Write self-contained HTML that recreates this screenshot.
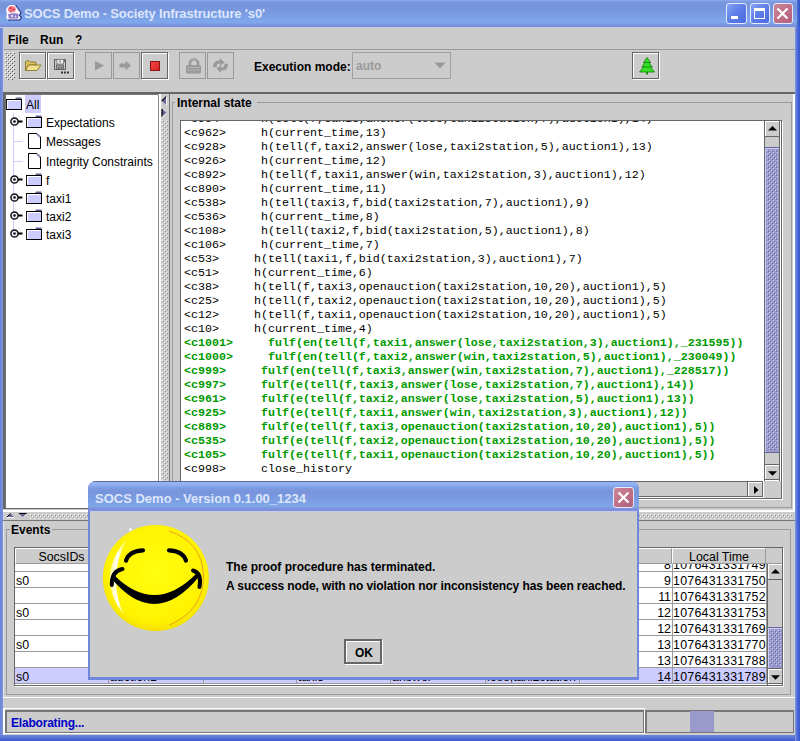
<!DOCTYPE html><html><head><meta charset="utf-8"><style>
html,body{margin:0;padding:0;width:800px;height:741px;overflow:hidden;background:#cccccc;}
body{position:relative;font-family:"Liberation Sans",sans-serif;font-size:12px;color:#000;}
div{box-sizing:border-box;position:absolute;}
.m{font-family:"Liberation Mono",monospace;font-size:11.67px;line-height:14px;white-space:pre;left:3px;}
.g{color:#009a00;font-weight:bold;}
.c{line-height:14px;font-size:12.4px;white-space:pre;}
</style></head><body>
<svg width="0" height="0" style="position:absolute"><defs>
<pattern id="bg" width="4" height="4" patternUnits="userSpaceOnUse"><rect x="0" y="0" width="1" height="1" fill="#ffffff"/><rect x="1" y="1" width="1" height="1" fill="#555555"/><rect x="2" y="2" width="1" height="1" fill="#ffffff"/><rect x="3" y="3" width="1" height="1" fill="#555555"/></pattern>
<pattern id="bgl" width="4" height="4" patternUnits="userSpaceOnUse"><rect x="0" y="0" width="1" height="1" fill="#ffffff"/><rect x="1" y="1" width="1" height="1" fill="#888888"/><rect x="2" y="2" width="1" height="1" fill="#ffffff"/><rect x="3" y="3" width="1" height="1" fill="#888888"/></pattern>
<pattern id="bt" width="4" height="4" patternUnits="userSpaceOnUse"><rect width="4" height="4" fill="#9999cc"/><rect x="0" y="0" width="1" height="1" fill="#ccccff"/><rect x="1" y="1" width="1" height="1" fill="#666699"/><rect x="2" y="2" width="1" height="1" fill="#ccccff"/><rect x="3" y="3" width="1" height="1" fill="#666699"/></pattern>
</defs></svg>
<div style="left:0px;top:0px;width:3px;height:741px;background:linear-gradient(90deg,#6a84d6,#7d94de)"></div>
<div style="left:0px;top:735px;width:800px;height:6px;background:linear-gradient(#7088d8,#4c68d4 4px,#3e5acc)"></div>
<div style="left:3px;top:27px;width:1px;height:708px;background:#c8ccec"></div>
<div style="left:0px;top:0px;width:800px;height:27px;background:linear-gradient(#8cacee 0,#7a98e0 2px,#7594dc 6px,#7898e0 12px,#7ca2e8 18px,#80a8ec 22px,#7896e0 25px,#7a8cd4 26px)"></div>
<div style="left:0px;top:27px;width:800px;height:1px;background:#c4cae8"></div>
<div style="left:795px;top:27px;width:5px;height:714px;background:linear-gradient(90deg,#8a9ae0 0,#6a84da 1px,#4262d8 3px,#3a58d0 5px)"></div>
<div style="left:797px;top:0px;width:3px;height:27px;background:linear-gradient(90deg,#5070d8,#3050c8)"></div>
<svg style="position:absolute;left:5px;top:4px;" width="17" height="18" viewBox="0 0 17 18"><path d="M1.5 4 L5 1 L10.5 1 L13 4.5 L16 8.5 L14.5 11.5 L16.5 13.5 L14.5 16 L3 16 L1 13.5 L2 10 L1 7 Z" fill="#f8f4fa"/>
<path d="M10.5 1 L13 4.5 L16 8.5 L14.5 11.5 L16.5 13.5 L14.5 16 L3 16" fill="none" stroke="#1c2c80" stroke-width="1.1"/>
<path d="M3 4 L6 2 L10 2.5 L11 5.5 L9.5 8 L5 8.5 L3 6.5 Z" fill="#f07080" opacity="0.85"/>
<circle cx="5.5" cy="4" r="1" fill="#d82030"/><circle cx="8.5" cy="5.5" r="1.1" fill="#e02838"/><circle cx="6" cy="7" r="0.8" fill="#c83040"/>
<path d="M3 10.5 Q8 8.5 13.5 10 L13 14.5 L4 14.5 Z" fill="#7e6cc0" opacity="0.9"/>
<circle cx="7" cy="12" r="1.2" fill="#e8e0ff"/><circle cx="10.5" cy="12.5" r="0.9" fill="#e8e0ff"/></svg>
<div style="left:24px;top:6px;white-space:pre;font-weight:bold;font-size:13px;line-height:15px;color:#dde6fa;letter-spacing:-0.15px">SOCS Demo - Society Infrastructure 's0'</div>
<div style="left:726px;top:3px;width:21px;height:21px;background:linear-gradient(135deg,#88a4f4 0,#5c7ce8 50%,#4a6ae0);border:1px solid #e4eafc;border-radius:3px"></div>
<div style="left:750px;top:3px;width:20px;height:21px;background:linear-gradient(135deg,#88a4f4 0,#5c7ce8 50%,#4a6ae0);border:1px solid #e4eafc;border-radius:3px"></div>
<div style="left:773px;top:3px;width:20px;height:21px;background:linear-gradient(135deg,#cc8898 0,#c07088 50%,#b06078);border:1px solid #e4eafc;border-radius:3px"></div>
<div style="left:731px;top:16px;width:7px;height:3px;background:#fff"></div>
<div style="left:754px;top:8px;width:11px;height:11px;border:1px solid #fff;border-top:3px solid #fff"></div>
<svg style="position:absolute;left:776px;top:7px;" width="13" height="13" viewBox="0 0 13 13"><path d="M1.5 1.5 L11.5 11.5 M11.5 1.5 L1.5 11.5" stroke="#fff" stroke-width="2.2"/></svg>
<div style="left:8px;top:33px;white-space:pre;font-weight:bold;line-height:14px">File</div>
<div style="left:40px;top:33px;white-space:pre;font-weight:bold;line-height:14px">Run</div>
<div style="left:75px;top:33px;white-space:pre;font-weight:bold;line-height:14px">?</div>
<div style="left:4px;top:49px;width:791px;height:1px;background:#999999"></div>
<svg style="position:absolute;left:5px;top:52px;shape-rendering:crispEdges" width="10" height="28" viewBox="0 0 10 28"><rect width="10" height="28" fill="url(#bg)"/></svg>
<div style="left:20px;top:53px;width:27px;height:27px;border:1px solid #fff"></div>
<div style="left:19px;top:52px;width:27px;height:27px;border:1px solid #666"></div>
<div style="left:48px;top:53px;width:27px;height:27px;border:1px solid #fff"></div>
<div style="left:47px;top:52px;width:27px;height:27px;border:1px solid #666"></div>
<div style="left:85px;top:52px;width:27px;height:27px;border:1px solid #999"></div>
<div style="left:113px;top:52px;width:27px;height:27px;border:1px solid #999"></div>
<div style="left:142px;top:53px;width:27px;height:27px;border:1px solid #fff"></div>
<div style="left:141px;top:52px;width:27px;height:27px;border:1px solid #666"></div>
<div style="left:179px;top:52px;width:27px;height:27px;border:1px solid #999"></div>
<div style="left:207px;top:52px;width:27px;height:27px;border:1px solid #999"></div>
<svg style="position:absolute;left:24px;top:58px;" width="18" height="16" viewBox="0 0 18 16"><path d="M1.5 3.5 L5 2.5 L6.5 4 L12 4 L12 7 L4.5 7 L1.5 12.5 Z" fill="#d8c060" stroke="#8a7420" stroke-width="0.9"/>
<path d="M4.5 7 L17 7 L13 12.5 L1.5 12.5 Z" fill="#f0e090" stroke="#8a7420" stroke-width="0.9"/></svg>
<svg style="position:absolute;left:52px;top:57px;" width="20" height="18" viewBox="0 0 20 18"><path d="M2.5 2.5 H13.5 V12.5 H2.5 Z" fill="#c8c8c8" stroke="#5a5a5a" stroke-width="1"/>
<rect x="5" y="2.5" width="6.5" height="4.5" fill="#f0f0f0" stroke="#777" stroke-width="0.8"/><rect x="7" y="3.5" width="2" height="2" fill="#999"/>
<rect x="12" y="3.5" width="1" height="1.5" fill="#555"/>
<rect x="4.5" y="8" width="7" height="4.5" fill="#aaa" stroke="#5a5a5a" stroke-width="0.8"/><rect x="6" y="9.5" width="1.5" height="2.5" fill="#666"/><rect x="8.8" y="9.5" width="1.5" height="2.5" fill="#666"/>
<rect x="9" y="14.5" width="2" height="2" fill="#333"/><rect x="12" y="14.5" width="2" height="2" fill="#333"/><rect x="15" y="14.5" width="2" height="2" fill="#333"/></svg>
<svg style="position:absolute;left:85px;top:52px;" width="27" height="27" viewBox="0 0 27 27"><path d="M10 9 L19 13.5 L10 18.5 Z" fill="#999"/></svg>
<svg style="position:absolute;left:113px;top:52px;" width="27" height="27" viewBox="0 0 27 27"><path d="M6.5 11.5 L12.5 11.5 L12.5 8.5 L18 13.5 L12.5 18.5 L12.5 15.5 L6.5 15.5 Z" fill="#999"/></svg>
<div style="left:150px;top:61px;width:10px;height:10px;background:linear-gradient(135deg,#f04444,#d82626);border:1px solid #8a1414"></div>
<svg style="position:absolute;left:179px;top:52px;" width="27" height="27" viewBox="0 0 27 27"><path d="M11 13 L11 10 Q15 4.5 19 10 L19 13" fill="none" stroke="#999" stroke-width="2.6"/>
<path d="M13.5 8 Q15 7 16.5 8" stroke="#bbb" stroke-width="1" fill="none"/>
<rect x="7" y="13" width="15" height="8.5" rx="1.5" fill="#999"/><path d="M8 15.5 H21 M8 18 H21" stroke="#b8b8b8" stroke-width="0.9"/></svg>
<svg style="position:absolute;left:207px;top:52px;" width="27" height="27" viewBox="0 0 27 27"><path d="M6 15 Q6 8 13 8.5 L13 6 L17.5 10.5 L13 14 L13 11.5 Q9.5 11 9.5 15.5 Z" fill="#999"/>
<path d="M21 12 Q21 19 14 18.5 L14 21 L9.5 16.5 L14 13 L14 15.5 Q17.5 16 17.5 11.5 Z" fill="#999"/></svg>
<div style="left:254px;top:60px;white-space:pre;font-weight:bold;line-height:14px">Execution mode:</div>
<div style="left:352px;top:52px;width:99px;height:27px;border:1px solid #a0a0a0"></div>
<div style="left:356px;top:59px;white-space:pre;color:#999;font-weight:bold;font-size:12px;line-height:14px">auto</div>
<svg style="position:absolute;left:434px;top:62px;" width="12" height="7" viewBox="0 0 12 7"><path d="M0.5 0.5 L11.5 0.5 L6 6.5 Z" fill="#999"/></svg>
<div style="left:633px;top:53px;width:27px;height:27px;border:1px solid #fff"></div>
<div style="left:632px;top:52px;width:27px;height:27px;border:1px solid #666"></div>
<svg style="position:absolute;left:638px;top:56px;" width="18" height="19" viewBox="0 0 18 19"><path d="M9 1.5 L12.5 6.5 L11 6.5 L14 11 L12.5 11 L16.5 16 L1.5 16 L5.5 11 L4 11 L7 6.5 L5.5 6.5 Z" fill="#33e022" stroke="#1c8a10" stroke-width="0.9" stroke-linejoin="round"/>
<path d="M5 6.5 H13 M3.5 11 H14.5" stroke="#1c8a10" stroke-width="0.9"/>
<rect x="8" y="16" width="2" height="2.5" fill="#1c8a10"/></svg>
<div style="left:3px;top:92px;width:792px;height:2px;background:#666"></div>
<div style="left:3px;top:92px;width:2px;height:417px;background:#666"></div>
<div style="left:5px;top:94px;width:154px;height:415px;border-top:1px solid #777;border-left:1px solid #777;border-right:1px solid #fff"></div>
<div style="left:6px;top:95px;width:152px;height:413px;background:#fff"></div>
<div style="left:158px;top:95px;width:1px;height:414px;background:#888"></div>
<div style="left:159px;top:94px;width:2px;height:416px;background:#fff"></div>
<div style="left:5px;top:508px;width:154px;height:1px;background:#666"></div>
<div style="left:3px;top:510px;width:792px;height:1px;background:#fff"></div>
<div style="left:3px;top:511px;width:792px;height:1px;background:#fff"></div>
<svg style="position:absolute;left:6px;top:97px;" width="16" height="13" viewBox="0 0 16 13"><path d="M8.5 3 L10 0.5 L15.5 0.5 L15.5 3 Z" fill="#666699"/><rect x="0.5" y="2.5" width="15" height="10" fill="#ccccff" stroke="#000" stroke-width="1"/><path d="M1 3.5 H14.5 M1.5 3.5 V12" stroke="#fff" stroke-width="1.2"/></svg>
<div style="left:25px;top:95px;width:16px;height:18px;background:#ccccff"></div>
<div style="left:26px;top:98px;white-space:pre;line-height:14px">All</div>
<div style="left:13px;top:113px;width:1px;height:118px;background:#ccccff"></div>
<svg style="position:absolute;left:10px;top:117px;" width="13" height="9" viewBox="0 0 13 9"><circle cx="4.5" cy="4.5" r="3.6" fill="#eeeeff" stroke="#111" stroke-width="1.5"/><circle cx="4.5" cy="4.5" r="1.3" fill="#111"/><path d="M8 4.5 H12.5" stroke="#000" stroke-width="2"/></svg>
<svg style="position:absolute;left:26px;top:115px;" width="16" height="13" viewBox="0 0 16 13"><path d="M8.5 3 L10 0.5 L15.5 0.5 L15.5 3 Z" fill="#666699"/><rect x="0.5" y="2.5" width="15" height="10" fill="#ccccff" stroke="#000" stroke-width="1"/><path d="M1 3.5 H14.5 M1.5 3.5 V12" stroke="#fff" stroke-width="1.2"/></svg>
<div style="left:46px;top:116px;white-space:pre;line-height:14px">Expectations</div>
<div style="left:14px;top:141px;width:9px;height:1px;background:#ccccff"></div>
<svg style="position:absolute;left:28px;top:133px;" width="14" height="16" viewBox="0 0 14 16"><path d="M0.5 0.5 L9 0.5 L12.5 4 L12.5 15.5 L0.5 15.5 Z" fill="#fff" stroke="#000" stroke-width="1"/><path d="M8.5 1 L12 4.5" stroke="#9999cc" stroke-width="1.2"/></svg>
<div style="left:46px;top:135px;white-space:pre;line-height:14px">Messages</div>
<div style="left:14px;top:161px;width:9px;height:1px;background:#ccccff"></div>
<svg style="position:absolute;left:28px;top:153px;" width="14" height="16" viewBox="0 0 14 16"><path d="M0.5 0.5 L9 0.5 L12.5 4 L12.5 15.5 L0.5 15.5 Z" fill="#fff" stroke="#000" stroke-width="1"/><path d="M8.5 1 L12 4.5" stroke="#9999cc" stroke-width="1.2"/></svg>
<div style="left:46px;top:155px;white-space:pre;line-height:14px">Integrity Constraints</div>
<svg style="position:absolute;left:10px;top:175px;" width="13" height="9" viewBox="0 0 13 9"><circle cx="4.5" cy="4.5" r="3.6" fill="#eeeeff" stroke="#111" stroke-width="1.5"/><circle cx="4.5" cy="4.5" r="1.3" fill="#111"/><path d="M8 4.5 H12.5" stroke="#000" stroke-width="2"/></svg>
<svg style="position:absolute;left:26px;top:173px;" width="16" height="13" viewBox="0 0 16 13"><path d="M8.5 3 L10 0.5 L15.5 0.5 L15.5 3 Z" fill="#666699"/><rect x="0.5" y="2.5" width="15" height="10" fill="#ccccff" stroke="#000" stroke-width="1"/><path d="M1 3.5 H14.5 M1.5 3.5 V12" stroke="#fff" stroke-width="1.2"/></svg>
<div style="left:46px;top:174px;white-space:pre;line-height:14px">f</div>
<svg style="position:absolute;left:10px;top:193px;" width="13" height="9" viewBox="0 0 13 9"><circle cx="4.5" cy="4.5" r="3.6" fill="#eeeeff" stroke="#111" stroke-width="1.5"/><circle cx="4.5" cy="4.5" r="1.3" fill="#111"/><path d="M8 4.5 H12.5" stroke="#000" stroke-width="2"/></svg>
<svg style="position:absolute;left:26px;top:191px;" width="16" height="13" viewBox="0 0 16 13"><path d="M8.5 3 L10 0.5 L15.5 0.5 L15.5 3 Z" fill="#666699"/><rect x="0.5" y="2.5" width="15" height="10" fill="#ccccff" stroke="#000" stroke-width="1"/><path d="M1 3.5 H14.5 M1.5 3.5 V12" stroke="#fff" stroke-width="1.2"/></svg>
<div style="left:46px;top:192px;white-space:pre;line-height:14px">taxi1</div>
<svg style="position:absolute;left:10px;top:211px;" width="13" height="9" viewBox="0 0 13 9"><circle cx="4.5" cy="4.5" r="3.6" fill="#eeeeff" stroke="#111" stroke-width="1.5"/><circle cx="4.5" cy="4.5" r="1.3" fill="#111"/><path d="M8 4.5 H12.5" stroke="#000" stroke-width="2"/></svg>
<svg style="position:absolute;left:26px;top:209px;" width="16" height="13" viewBox="0 0 16 13"><path d="M8.5 3 L10 0.5 L15.5 0.5 L15.5 3 Z" fill="#666699"/><rect x="0.5" y="2.5" width="15" height="10" fill="#ccccff" stroke="#000" stroke-width="1"/><path d="M1 3.5 H14.5 M1.5 3.5 V12" stroke="#fff" stroke-width="1.2"/></svg>
<div style="left:46px;top:210px;white-space:pre;line-height:14px">taxi2</div>
<svg style="position:absolute;left:10px;top:229px;" width="13" height="9" viewBox="0 0 13 9"><circle cx="4.5" cy="4.5" r="3.6" fill="#eeeeff" stroke="#111" stroke-width="1.5"/><circle cx="4.5" cy="4.5" r="1.3" fill="#111"/><path d="M8 4.5 H12.5" stroke="#000" stroke-width="2"/></svg>
<svg style="position:absolute;left:26px;top:227px;" width="16" height="13" viewBox="0 0 16 13"><path d="M8.5 3 L10 0.5 L15.5 0.5 L15.5 3 Z" fill="#666699"/><rect x="0.5" y="2.5" width="15" height="10" fill="#ccccff" stroke="#000" stroke-width="1"/><path d="M1 3.5 H14.5 M1.5 3.5 V12" stroke="#fff" stroke-width="1.2"/></svg>
<div style="left:46px;top:228px;white-space:pre;line-height:14px">taxi3</div>
<svg style="position:absolute;left:161px;top:96px;" width="7" height="22" viewBox="0 0 7 22"><path d="M5.5 0.5 L0.5 4.8 L5.5 9 Z" fill="#666699"/><path d="M5.5 0.5 L0.8 4.8" stroke="#000" stroke-width="1.1"/><path d="M5.5 0.5 V9" stroke="#fff" stroke-width="1"/>
<path d="M1 13 L5.8 17 L1 21 Z" fill="#666699"/><path d="M1 13 V21" stroke="#000" stroke-width="1.2"/><path d="M5.8 17 L1 21" stroke="#fff" stroke-width="0.9"/></svg>
<svg style="position:absolute;left:162px;top:120px;shape-rendering:crispEdges" width="6" height="388" viewBox="0 0 6 388"><rect width="6" height="388" fill="url(#bgl)"/></svg>
<div style="left:169px;top:94px;width:1px;height:416px;background:#777"></div>
<div style="left:172px;top:102px;width:620px;height:406px;border:1px solid #999"></div>
<div style="left:175px;top:95px;width:82px;height:14px;background:#cccccc"></div>
<div style="left:177px;top:96px;white-space:pre;font-weight:bold;line-height:14px">Internal state</div>
<div style="left:181px;top:121px;width:602px;height:379px;border:1px solid #fff"></div>
<div style="left:180px;top:120px;width:602px;height:379px;border:1px solid #666"></div>
<div style="left:181px;top:121px;width:583px;height:360px;background:#fff;overflow:hidden"><div class="m" style="top:-9px">&lt;c964&gt;     h(tell(f,taxi3,answer(lose,taxi2station,7),auction1),14)</div><div class="m" style="top:5px">&lt;c962&gt;     h(current_time,13)</div><div class="m" style="top:19px">&lt;c928&gt;     h(tell(f,taxi2,answer(lose,taxi2station,5),auction1),13)</div><div class="m" style="top:33px">&lt;c926&gt;     h(current_time,12)</div><div class="m" style="top:47px">&lt;c892&gt;     h(tell(f,taxi1,answer(win,taxi2station,3),auction1),12)</div><div class="m" style="top:61px">&lt;c890&gt;     h(current_time,11)</div><div class="m" style="top:75px">&lt;c538&gt;     h(tell(taxi3,f,bid(taxi2station,7),auction1),9)</div><div class="m" style="top:89px">&lt;c536&gt;     h(current_time,8)</div><div class="m" style="top:103px">&lt;c108&gt;     h(tell(taxi2,f,bid(taxi2station,5),auction1),8)</div><div class="m" style="top:117px">&lt;c106&gt;     h(current_time,7)</div><div class="m" style="top:131px">&lt;c53&gt;     h(tell(taxi1,f,bid(taxi2station,3),auction1),7)</div><div class="m" style="top:145px">&lt;c51&gt;     h(current_time,6)</div><div class="m" style="top:159px">&lt;c38&gt;     h(tell(f,taxi3,openauction(taxi2station,10,20),auction1),5)</div><div class="m" style="top:173px">&lt;c25&gt;     h(tell(f,taxi2,openauction(taxi2station,10,20),auction1),5)</div><div class="m" style="top:187px">&lt;c12&gt;     h(tell(f,taxi1,openauction(taxi2station,10,20),auction1),5)</div><div class="m" style="top:201px">&lt;c10&gt;     h(current_time,4)</div><div class="m g" style="top:215px">&lt;c1001&gt;     fulf(en(tell(f,taxi1,answer(lose,taxi2station,3),auction1),_231595))</div><div class="m g" style="top:229px">&lt;c1000&gt;     fulf(en(tell(f,taxi2,answer(win,taxi2station,5),auction1),_230049))</div><div class="m g" style="top:243px">&lt;c999&gt;     fulf(en(tell(f,taxi3,answer(win,taxi2station,7),auction1),_228517))</div><div class="m g" style="top:257px">&lt;c997&gt;     fulf(e(tell(f,taxi3,answer(lose,taxi2station,7),auction1),14))</div><div class="m g" style="top:271px">&lt;c961&gt;     fulf(e(tell(f,taxi2,answer(lose,taxi2station,5),auction1),13))</div><div class="m g" style="top:285px">&lt;c925&gt;     fulf(e(tell(f,taxi1,answer(win,taxi2station,3),auction1),12))</div><div class="m g" style="top:299px">&lt;c889&gt;     fulf(e(tell(f,taxi3,openauction(taxi2station,10,20),auction1),5))</div><div class="m g" style="top:313px">&lt;c535&gt;     fulf(e(tell(f,taxi2,openauction(taxi2station,10,20),auction1),5))</div><div class="m g" style="top:327px">&lt;c105&gt;     fulf(e(tell(f,taxi1,openauction(taxi2station,10,20),auction1),5))</div><div class="m" style="top:341px">&lt;c998&gt;     close_history</div></div>
<div style="left:764px;top:121px;width:17px;height:360px;background:#cccccc"></div>
<div style="left:764px;top:121px;width:1px;height:360px;background:#666"></div>
<div style="left:779px;top:121px;width:1px;height:360px;background:#666"></div>
<div style="left:780px;top:121px;width:1px;height:360px;background:#fff"></div>
<div style="left:765px;top:121px;width:14px;height:1px;background:#fff"></div>
<div style="left:765px;top:121px;width:1px;height:15px;background:#fff"></div>
<div style="left:765px;top:136px;width:14px;height:1px;background:#666"></div>
<svg style="position:absolute;left:768px;top:126px;" width="9" height="5" viewBox="0 0 9 5"><path d="M0 4.6 L4.5 0.1 L9 4.6 Z" fill="#000"/></svg>
<div style="left:765px;top:147px;width:14px;height:306px;border-top:1px solid #666699;border-bottom:1px solid #666699;background:#9999cc"></div>
<div style="left:765px;top:148px;width:14px;height:1px;background:#ccccff"></div>
<div style="left:765px;top:148px;width:1px;height:304px;background:#ccccff"></div>
<svg style="position:absolute;left:767px;top:150px;shape-rendering:crispEdges" width="11" height="300" viewBox="0 0 11 300"><rect width="11" height="300" fill="url(#bt)"/></svg>
<div style="left:765px;top:464px;width:14px;height:1px;background:#666"></div>
<div style="left:765px;top:465px;width:14px;height:1px;background:#fff"></div>
<div style="left:765px;top:465px;width:1px;height:15px;background:#fff"></div>
<div style="left:765px;top:479px;width:14px;height:1px;background:#666"></div>
<div style="left:765px;top:480px;width:14px;height:1px;background:#fff"></div>
<svg style="position:absolute;left:768px;top:471px;" width="9" height="5" viewBox="0 0 9 5"><path d="M0 0.2 L9 0.2 L4.5 4.7 Z" fill="#000"/></svg>
<div style="left:181px;top:481px;width:582px;height:17px;background:#cccccc"></div>
<div style="left:181px;top:481px;width:582px;height:1px;background:#666"></div>
<div style="left:181px;top:496px;width:582px;height:1px;background:#666"></div>
<div style="left:181px;top:497px;width:582px;height:1px;background:#fff"></div>
<div style="left:747px;top:481px;width:1px;height:16px;background:#666"></div>
<div style="left:748px;top:482px;width:1px;height:14px;background:#fff"></div>
<div style="left:748px;top:482px;width:14px;height:1px;background:#fff"></div>
<div style="left:762px;top:481px;width:1px;height:16px;background:#666"></div>
<div style="left:763px;top:481px;width:1px;height:17px;background:#fff"></div>
<svg style="position:absolute;left:754px;top:486px;" width="5" height="8" viewBox="0 0 5 8"><path d="M0 0 L4.6 4 L0 8 Z" fill="#000"/></svg>
<svg style="position:absolute;left:6px;top:513px;" width="22" height="5" viewBox="0 0 22 5"><path d="M0.5 4.5 L4.5 0.5 L8.5 4.5 Z" fill="#666699"/><path d="M0.5 4.5 L4.5 0.5" stroke="#000" stroke-width="1"/><path d="M0.5 4.5 H8.5" stroke="#fff" stroke-width="1"/>
<path d="M13 0.5 L21 0.5 L17 4.5 Z" fill="#666699"/><path d="M13 0.5 H21" stroke="#000" stroke-width="1"/><path d="M21 0.5 L17 4.5" stroke="#fff" stroke-width="1"/></svg>
<svg style="position:absolute;left:30px;top:514px;shape-rendering:crispEdges" width="762" height="5" viewBox="0 0 762 5"><rect width="762" height="5" fill="url(#bgl)"/></svg>
<div style="left:3px;top:520px;width:792px;height:1px;background:#777"></div>
<div style="left:3px;top:521px;width:1px;height:176px;background:#e4e4e4"></div>
<div style="left:793px;top:94px;width:2px;height:417px;background:#fff"></div>
<div style="left:6px;top:529px;width:785px;height:166px;border:1px solid #999"></div>
<div style="left:10px;top:522px;width:42px;height:14px;background:#cccccc"></div>
<div style="left:11px;top:523px;white-space:pre;font-weight:bold;line-height:14px">Events</div>
<div style="left:15px;top:548px;width:769px;height:139px;border:1px solid #fff"></div>
<div style="left:14px;top:547px;width:769px;height:139px;border:1px solid #666"></div>
<div style="left:15px;top:548px;width:767px;height:137px;background:#fff;overflow:hidden"><div style="left:0px;top:0px;width:93px;height:16px;background:#cccccc;border-right:1px solid #999;border-bottom:1px solid #999;border-left:1px solid #fff;border-top:1px solid #fff"></div><div style="left:93px;top:0px;width:95px;height:16px;background:#cccccc;border-right:1px solid #999;border-bottom:1px solid #999;border-left:1px solid #fff;border-top:1px solid #fff"></div><div style="left:188px;top:0px;width:93px;height:16px;background:#cccccc;border-right:1px solid #999;border-bottom:1px solid #999;border-left:1px solid #fff;border-top:1px solid #fff"></div><div style="left:281px;top:0px;width:94px;height:16px;background:#cccccc;border-right:1px solid #999;border-bottom:1px solid #999;border-left:1px solid #fff;border-top:1px solid #fff"></div><div style="left:375px;top:0px;width:95px;height:16px;background:#cccccc;border-right:1px solid #999;border-bottom:1px solid #999;border-left:1px solid #fff;border-top:1px solid #fff"></div><div style="left:470px;top:0px;width:94px;height:16px;background:#cccccc;border-right:1px solid #999;border-bottom:1px solid #999;border-left:1px solid #fff;border-top:1px solid #fff"></div><div style="left:564px;top:0px;width:93px;height:16px;background:#cccccc;border-right:1px solid #999;border-bottom:1px solid #999;border-left:1px solid #fff;border-top:1px solid #fff"></div><div style="left:657px;top:0px;width:94px;height:16px;background:#cccccc;border-right:1px solid #999;border-bottom:1px solid #999;border-left:1px solid #fff;border-top:1px solid #fff"></div><div style="left:751px;top:0px;width:16px;height:16px;background:#cccccc;border-bottom:1px solid #999"></div><div style="left:0px;top:2px;width:93px;height:14px;text-align:center"><div class="c" style="position:static">SocsIDs</div></div><div style="left:657px;top:2px;width:94px;height:14px;text-align:center"><div class="c" style="position:static">Local Time</div></div><div style="left:0;top:16px;width:752px;height:121px;overflow:hidden"><div style="left:0;top:-16px;width:752px;height:200px"><div style="left:0;top:8px;width:752px;height:16px;background:#fff;border-bottom:1px solid #999"></div><div style="left:93px;top:8px;width:1px;height:16px;background:#999"></div><div style="left:188px;top:8px;width:1px;height:16px;background:#999"></div><div style="left:281px;top:8px;width:1px;height:16px;background:#999"></div><div style="left:375px;top:8px;width:1px;height:16px;background:#999"></div><div style="left:470px;top:8px;width:1px;height:16px;background:#999"></div><div style="left:564px;top:8px;width:1px;height:16px;background:#999"></div><div style="left:657px;top:8px;width:1px;height:16px;background:#999"></div><div style="left:751px;top:8px;width:1px;height:16px;background:#999"></div><div class="c" style="left:1px;top:10px"></div><div class="c" style="left:564px;width:92px;text-align:right;top:10px;padding-right:0px">8</div><div class="c" style="left:658px;top:10px;letter-spacing:0.25px">1076431331749</div><div style="left:0;top:24px;width:752px;height:16px;background:#fff;border-bottom:1px solid #999"></div><div style="left:93px;top:24px;width:1px;height:16px;background:#999"></div><div style="left:188px;top:24px;width:1px;height:16px;background:#999"></div><div style="left:281px;top:24px;width:1px;height:16px;background:#999"></div><div style="left:375px;top:24px;width:1px;height:16px;background:#999"></div><div style="left:470px;top:24px;width:1px;height:16px;background:#999"></div><div style="left:564px;top:24px;width:1px;height:16px;background:#999"></div><div style="left:657px;top:24px;width:1px;height:16px;background:#999"></div><div style="left:751px;top:24px;width:1px;height:16px;background:#999"></div><div class="c" style="left:1px;top:26px">s0</div><div class="c" style="left:564px;width:92px;text-align:right;top:26px;padding-right:0px">9</div><div class="c" style="left:658px;top:26px;letter-spacing:0.25px">1076431331750</div><div style="left:0;top:40px;width:752px;height:16px;background:#fff;border-bottom:1px solid #999"></div><div style="left:93px;top:40px;width:1px;height:16px;background:#999"></div><div style="left:188px;top:40px;width:1px;height:16px;background:#999"></div><div style="left:281px;top:40px;width:1px;height:16px;background:#999"></div><div style="left:375px;top:40px;width:1px;height:16px;background:#999"></div><div style="left:470px;top:40px;width:1px;height:16px;background:#999"></div><div style="left:564px;top:40px;width:1px;height:16px;background:#999"></div><div style="left:657px;top:40px;width:1px;height:16px;background:#999"></div><div style="left:751px;top:40px;width:1px;height:16px;background:#999"></div><div class="c" style="left:1px;top:42px"></div><div class="c" style="left:564px;width:92px;text-align:right;top:42px;padding-right:0px">11</div><div class="c" style="left:658px;top:42px;letter-spacing:0.25px">1076431331752</div><div style="left:0;top:56px;width:752px;height:16px;background:#fff;border-bottom:1px solid #999"></div><div style="left:93px;top:56px;width:1px;height:16px;background:#999"></div><div style="left:188px;top:56px;width:1px;height:16px;background:#999"></div><div style="left:281px;top:56px;width:1px;height:16px;background:#999"></div><div style="left:375px;top:56px;width:1px;height:16px;background:#999"></div><div style="left:470px;top:56px;width:1px;height:16px;background:#999"></div><div style="left:564px;top:56px;width:1px;height:16px;background:#999"></div><div style="left:657px;top:56px;width:1px;height:16px;background:#999"></div><div style="left:751px;top:56px;width:1px;height:16px;background:#999"></div><div class="c" style="left:1px;top:58px">s0</div><div class="c" style="left:564px;width:92px;text-align:right;top:58px;padding-right:0px">12</div><div class="c" style="left:658px;top:58px;letter-spacing:0.25px">1076431331753</div><div style="left:0;top:72px;width:752px;height:16px;background:#fff;border-bottom:1px solid #999"></div><div style="left:93px;top:72px;width:1px;height:16px;background:#999"></div><div style="left:188px;top:72px;width:1px;height:16px;background:#999"></div><div style="left:281px;top:72px;width:1px;height:16px;background:#999"></div><div style="left:375px;top:72px;width:1px;height:16px;background:#999"></div><div style="left:470px;top:72px;width:1px;height:16px;background:#999"></div><div style="left:564px;top:72px;width:1px;height:16px;background:#999"></div><div style="left:657px;top:72px;width:1px;height:16px;background:#999"></div><div style="left:751px;top:72px;width:1px;height:16px;background:#999"></div><div class="c" style="left:1px;top:74px"></div><div class="c" style="left:564px;width:92px;text-align:right;top:74px;padding-right:0px">12</div><div class="c" style="left:658px;top:74px;letter-spacing:0.25px">1076431331769</div><div style="left:0;top:88px;width:752px;height:16px;background:#fff;border-bottom:1px solid #999"></div><div style="left:93px;top:88px;width:1px;height:16px;background:#999"></div><div style="left:188px;top:88px;width:1px;height:16px;background:#999"></div><div style="left:281px;top:88px;width:1px;height:16px;background:#999"></div><div style="left:375px;top:88px;width:1px;height:16px;background:#999"></div><div style="left:470px;top:88px;width:1px;height:16px;background:#999"></div><div style="left:564px;top:88px;width:1px;height:16px;background:#999"></div><div style="left:657px;top:88px;width:1px;height:16px;background:#999"></div><div style="left:751px;top:88px;width:1px;height:16px;background:#999"></div><div class="c" style="left:1px;top:90px">s0</div><div class="c" style="left:564px;width:92px;text-align:right;top:90px;padding-right:0px">13</div><div class="c" style="left:658px;top:90px;letter-spacing:0.25px">1076431331770</div><div style="left:0;top:104px;width:752px;height:16px;background:#fff;border-bottom:1px solid #999"></div><div style="left:93px;top:104px;width:1px;height:16px;background:#999"></div><div style="left:188px;top:104px;width:1px;height:16px;background:#999"></div><div style="left:281px;top:104px;width:1px;height:16px;background:#999"></div><div style="left:375px;top:104px;width:1px;height:16px;background:#999"></div><div style="left:470px;top:104px;width:1px;height:16px;background:#999"></div><div style="left:564px;top:104px;width:1px;height:16px;background:#999"></div><div style="left:657px;top:104px;width:1px;height:16px;background:#999"></div><div style="left:751px;top:104px;width:1px;height:16px;background:#999"></div><div class="c" style="left:1px;top:106px"></div><div class="c" style="left:564px;width:92px;text-align:right;top:106px;padding-right:0px">13</div><div class="c" style="left:658px;top:106px;letter-spacing:0.25px">1076431331788</div><div style="left:0;top:120px;width:752px;height:16px;background:#ccccff;border-bottom:1px solid #999"></div><div style="left:93px;top:120px;width:1px;height:16px;background:#999"></div><div style="left:188px;top:120px;width:1px;height:16px;background:#999"></div><div style="left:281px;top:120px;width:1px;height:16px;background:#999"></div><div style="left:375px;top:120px;width:1px;height:16px;background:#999"></div><div style="left:470px;top:120px;width:1px;height:16px;background:#999"></div><div style="left:564px;top:120px;width:1px;height:16px;background:#999"></div><div style="left:657px;top:120px;width:1px;height:16px;background:#999"></div><div style="left:751px;top:120px;width:1px;height:16px;background:#999"></div><div class="c" style="left:1px;top:122px">s0</div><div class="c" style="left:564px;width:92px;text-align:right;top:122px;padding-right:0px">14</div><div class="c" style="left:658px;top:122px;letter-spacing:0.25px">1076431331789</div><div class="c" style="left:95px;top:122px">auction1</div><div class="c" style="left:283px;top:122px">taxi3</div><div class="c" style="left:377px;top:122px">answer</div><div class="c" style="left:472px;top:122px">lose,taxi2station</div></div></div></div>
<div style="left:767px;top:564px;width:17px;height:121px;background:#cccccc"></div>
<div style="left:767px;top:564px;width:1px;height:121px;background:#666"></div>
<div style="left:782px;top:564px;width:1px;height:121px;background:#666"></div>
<div style="left:783px;top:564px;width:1px;height:121px;background:#fff"></div>
<div style="left:768px;top:564px;width:14px;height:1px;background:#fff"></div>
<div style="left:768px;top:564px;width:1px;height:15px;background:#fff"></div>
<div style="left:768px;top:579px;width:14px;height:1px;background:#666"></div>
<svg style="position:absolute;left:771px;top:569px;" width="9" height="5" viewBox="0 0 9 5"><path d="M0 4.6 L4.5 0.1 L9 4.6 Z" fill="#000"/></svg>
<div style="left:768px;top:627px;width:14px;height:42px;border-top:1px solid #666699;border-bottom:1px solid #666699;background:#9999cc"></div>
<div style="left:768px;top:628px;width:14px;height:1px;background:#ccccff"></div>
<div style="left:768px;top:628px;width:1px;height:40px;background:#ccccff"></div>
<svg style="position:absolute;left:770px;top:630px;shape-rendering:crispEdges" width="11" height="36" viewBox="0 0 11 36"><rect width="11" height="36" fill="url(#bt)"/></svg>
<div style="left:768px;top:668px;width:14px;height:1px;background:#666"></div>
<div style="left:768px;top:669px;width:14px;height:1px;background:#fff"></div>
<div style="left:768px;top:669px;width:1px;height:15px;background:#fff"></div>
<div style="left:768px;top:683px;width:14px;height:1px;background:#666"></div>
<div style="left:768px;top:684px;width:14px;height:1px;background:#fff"></div>
<svg style="position:absolute;left:771px;top:675px;" width="9" height="5" viewBox="0 0 9 5"><path d="M0 0.2 L9 0.2 L4.5 4.7 Z" fill="#000"/></svg>
<div style="left:3px;top:697px;width:792px;height:1px;background:#fff"></div>
<div style="left:3px;top:708px;width:642px;height:1px;background:#fff"></div>
<div style="left:3px;top:708px;width:2px;height:27px;background:#fff"></div>
<div style="left:5px;top:710px;width:639px;height:23px;border-style:solid;border-color:#777;border-width:2px 1px 1px 2px"></div>
<div style="left:5px;top:733px;width:640px;height:1px;background:#fff"></div>
<div style="left:644px;top:710px;width:1px;height:24px;background:#fff"></div>
<div style="left:11px;top:716px;white-space:pre;font-weight:bold;color:#0000c8;line-height:14px;letter-spacing:-0.2px">Elaborating...</div>
<div style="left:645px;top:710px;width:149px;height:23px;border-style:solid;border-color:#777;border-width:2px 1px 1px 2px"></div>
<div style="left:690px;top:711px;width:24px;height:21px;background:#9999cc"></div>
<div style="left:88px;top:481px;width:551px;height:199px;background:#cccccc;border:2px solid #7088dc;border-top:none;border-radius:8px 8px 0 0"></div>
<div style="left:88px;top:481px;width:551px;height:30px;background:linear-gradient(#5c6a98 0,#5c6a98 1px,#94b4f4 1px,#90b0f0 4px,#7c9ae0 7px,#7894dc 12px,#7a9ee4 20px,#80a8e8 25px,#7c90dc 28px,#7a88d8 29px,#8898dc 30px);border-radius:8px 8px 0 0"></div>
<div style="left:90px;top:511px;width:547px;height:1px;background:#c4cce8"></div>
<div style="left:95px;top:491px;white-space:pre;font-weight:bold;font-size:13px;line-height:15px;color:#dde6fa">SOCS Demo - Version 0.1.00_1234</div>
<div style="left:613px;top:487px;width:21px;height:21px;background:linear-gradient(135deg,#cc8898 0,#c07088 50%,#b06078);border:1px solid #e4eafc;border-radius:3px"></div>
<svg style="position:absolute;left:617px;top:491px;" width="13" height="13" viewBox="0 0 13 13"><path d="M1.5 1.5 L11.5 11.5 M11.5 1.5 L1.5 11.5" stroke="#fff" stroke-width="2.2"/></svg>
<div style="left:88px;top:677px;width:551px;height:3px;background:#7088dc"></div>
<svg style="position:absolute;left:100px;top:522px;" width="112" height="112" viewBox="0 0 112 112"><defs><radialGradient id="sg" cx="0.5" cy="0.45" r="0.55"><stop offset="0" stop-color="#ffff10"/><stop offset="0.85" stop-color="#fff200"/><stop offset="1" stop-color="#f4e000"/></radialGradient></defs>
<circle cx="55.8" cy="56" r="53" fill="url(#sg)"/>
<path d="M69 9 Q102 20 103.5 53 Q104 88 69.5 103" fill="none" stroke="#e8a020" stroke-width="1"/>
<defs><linearGradient id="hl" x1="0" x2="1" y1="0" y2="0"><stop offset="0" stop-color="#fffff0" stop-opacity="0.6"/><stop offset="0.45" stop-color="#ffffff"/><stop offset="1" stop-color="#ffffc0" stop-opacity="0.3"/></linearGradient></defs><path d="M27 17 Q-6 55 24 93 Q6.5 55 27 17 Z" fill="url(#hl)"/>
<circle cx="30.5" cy="7.5" r="1.3" fill="#fff"/>
<path d="M26 38.5 Q29 29 43 28.3" fill="none" stroke="#000" stroke-width="4.2" stroke-linecap="round"/>
<path d="M69 28.3 Q83 29 86 38.5" fill="none" stroke="#000" stroke-width="4.2" stroke-linecap="round"/>
<path d="M11 56 Q55 109 99.5 54 L97 51 Q55 94 14 53 Z" fill="#000"/>
<path d="M22.5 47 Q11.5 49 11.8 63" fill="none" stroke="#000" stroke-width="4" stroke-linecap="round"/>
<path d="M93 48.5 Q102 51 99.5 65" fill="none" stroke="#000" stroke-width="4" stroke-linecap="round"/></svg>
<div style="left:226px;top:560px;white-space:pre;font-weight:bold;line-height:14px">The proof procedure has terminated.</div>
<div style="left:226px;top:579px;white-space:pre;font-weight:bold;line-height:14px;letter-spacing:-0.1px">A success node, with no violation nor inconsistency has been reached.</div>
<div style="left:345px;top:640px;width:38px;height:25px;border:1px solid #fff"></div>
<div style="left:344px;top:639px;width:38px;height:25px;border:2px solid #666"></div>
<div style="left:346px;top:641px;width:1px;height:21px;background:#fff"></div>
<div style="left:346px;top:641px;width:34px;height:1px;background:#fff"></div>
<div style="left:355px;top:646px;white-space:pre;font-weight:bold;line-height:14px">OK</div>
</body></html>
